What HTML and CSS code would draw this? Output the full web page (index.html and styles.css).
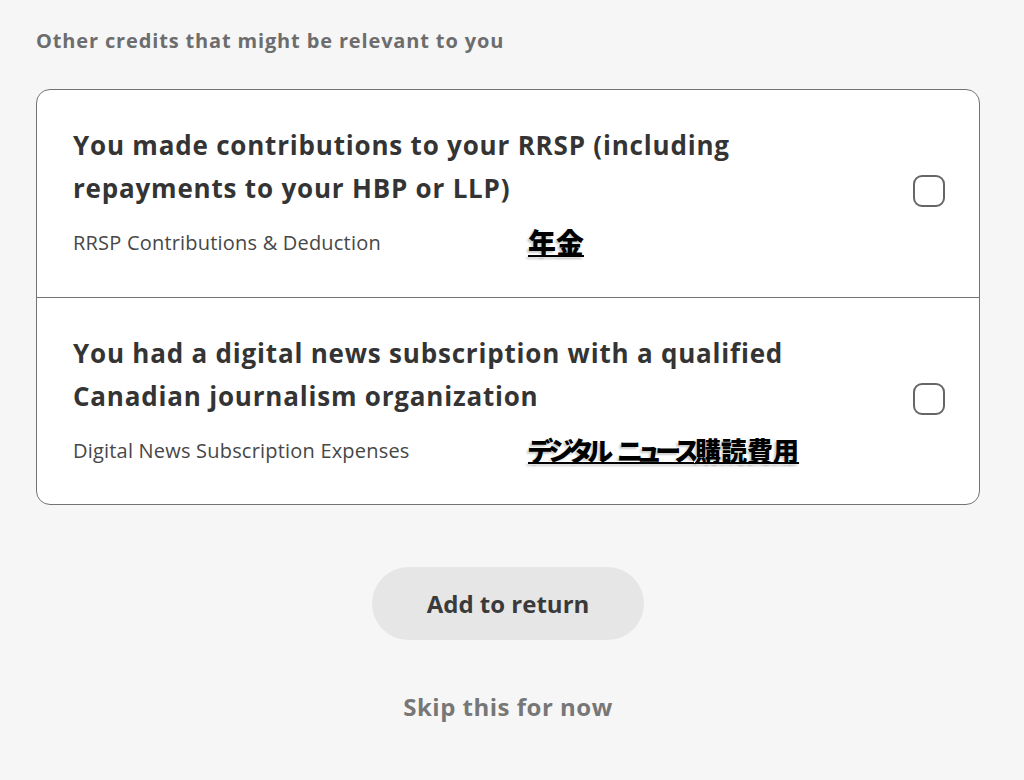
FILE: index.html
```html
<!DOCTYPE html>
<html lang="en">
<head>
<meta charset="utf-8">
<link rel="stylesheet" href="styles.css">
</head>
<body>
<main class="page">
  <h2 class="section-title">Other credits that might be relevant to you</h2>
  <div class="card">
    <div class="row">
      <div class="row-text">
        <div class="row-title">You made contributions to your RRSP (including<br>repayments to your HBP or LLP)</div>
        <div class="row-sub">RRSP Contributions &amp; Deduction</div>
      </div>
      <span class="checkbox"></span>
      <span class="note note-1" lang="ja">年金</span>
    </div>
    <div class="row">
      <div class="row-text">
        <div class="row-title">You had a digital news subscription with a qualified<br>Canadian journalism organization</div>
        <div class="row-sub">Digital News Subscription Expenses</div>
      </div>
      <span class="checkbox"></span>
      <span class="note note-2" lang="ja"><span class="kana">デジタル ニュース</span>購読費用</span>
    </div>
  </div>
  <div class="actions">
    <button class="btn-add">Add to return</button>
    <a class="skip">Skip this for now</a>
  </div>
</main>
</body>
</html>
```

FILE: styles.css
```css
html, body {
  margin: 0;
  padding: 0;
  background: #f6f6f6;
}
body {
  font-family: "Open Sans", "Noto Sans", sans-serif;
  width: 1024px;
  height: 780px;
  overflow: hidden;
}
.page {
  padding: 26px 44px 0 36px;
}
.section-title {
  margin: 0;
  font-size: 20px;
  font-weight: 700;
  color: #6d6d6d;
  line-height: 30px;
  letter-spacing: 0.85px;
}
.card {
  margin-top: 33px;
  background: #fff;
  border: 1.5px solid #737373;
  border-radius: 14px;
}
.row {
  position: relative;
  display: flex;
  align-items: center;
  height: 207px;
  padding: 0 34px 0 36px;
  box-sizing: border-box;
}
.row + .row {
  border-top: 1.5px solid #737373;
}
.row-text {
  flex: 1;
  padding-bottom: 6px;
}
.row-title {
  font-size: 26px;
  font-weight: 700;
  color: #343434;
  line-height: 43px;
  letter-spacing: 0.8px;
  white-space: nowrap;
}
.row-sub {
  margin-top: 19px;
  font-size: 20px;
  color: #474747;
  line-height: 28px;
  letter-spacing: 0.2px;
}
.checkbox {
  width: 28px;
  height: 28px;
  border: 2.5px solid #666;
  border-radius: 9px;
  flex: none;
  margin-bottom: 5px;
}
.note {
  position: absolute;
  left: 491px;
  font-family: "Noto Sans CJK JP", sans-serif;
  font-weight: 900;
  font-size: 26px;
  line-height: 30px;
  color: #000;
  font-feature-settings: "palt";
  text-decoration: underline;
  text-decoration-thickness: 2px;
  text-underline-offset: 1px;
  text-shadow: -2px 2px 2px rgba(0,0,0,0.2), 1px 1px 0 #fff, -1px -1px 0 #fff;
}
.kana {
  letter-spacing: -4.5px;
  word-spacing: 7px;
}
.note-1 {
  top: 137px;
  font-size: 28px;
}
.note-2 { top: 137px; }
.actions {
  display: flex;
  flex-direction: column;
  align-items: center;
}
.btn-add {
  margin-top: 62px;
  width: 272px;
  height: 73px;
  border: none;
  border-radius: 37px;
  background: #e6e6e6;
  font-family: inherit;
  font-size: 24px;
  font-weight: 700;
  color: #3a3a3a;
}
.skip {
  margin-top: 52px;
  font-size: 24px;
  font-weight: 700;
  color: #777;
  line-height: 30px;
  letter-spacing: 0.5px;
}
```
